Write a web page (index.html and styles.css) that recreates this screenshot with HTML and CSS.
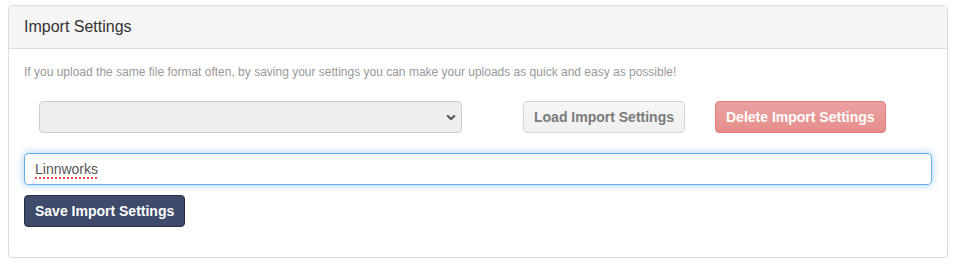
FILE: index.html
```html
<!DOCTYPE html>
<html lang="en">
<head>
    <meta charset="UTF-8">
    <meta name="viewport" content="width=device-width, initial-scale=1.0">
    <title>Import Settings</title>
    <link rel="stylesheet" href="styles.css">
</head>
<body>
    <div class="panel">
        <div class="panel-heading">Import Settings</div>
        <div class="panel-body">
            <p class="help-text">If you upload the same file format often, by saving your settings you can make your uploads as quick and easy as possible!</p>

            <div class="settings-row">
                <div class="select-col">
                    <select class="form-control" disabled>
                        <option></option>
                    </select>
                </div>
                <button class="btn btn-default" disabled>Load Import Settings</button>
                <button class="btn btn-danger" disabled>Delete Import Settings</button>
            </div>

            <div class="form-control name-input" contenteditable="true"><span class="misspelt">Linnworks</span></div>
            <button class="btn btn-primary">Save Import Settings</button>
        </div>
    </div>
</body>
</html>
```

FILE: styles.css
```css
body {
    font-family: 'Liberation Sans', Arial, Helvetica, sans-serif;
    color: #333;
    margin: 0;
    padding: 5px 6px 0 8px;
    background: #fff;
}

.panel {
    border: 1px solid #ddd;
    border-radius: 4px;
    box-shadow: 0 1px 1px rgba(0, 0, 0, 0.05);
}

.panel-heading {
    background: #f5f5f5;
    border-bottom: 1px solid #ddd;
    border-radius: 3px 3px 0 0;
    padding: 12px 15px 0;
    height: 30px;
    font-size: 16px;
    line-height: 18px;
    color: #333;
}

.panel-body {
    padding: 15px 15px 30px;
}

.help-text {
    margin: 0 0 21px;
    font-size: 12px;
    line-height: 16px;
    color: #999;
}

.settings-row {
    display: flex;
    align-items: center;
    margin-bottom: 20px;
}

.select-col {
    padding-left: 15px;
    width: 423px;
}

.form-control {
    display: block;
    width: 100%;
    box-sizing: border-box;
    font-family: inherit;
    font-size: 14px;
    color: #555;
    border: 1px solid #ccc;
    border-radius: 4px;
}

select.form-control {
    height: 32px;
    background: #eee url("data:image/svg+xml;utf8,<svg xmlns='http://www.w3.org/2000/svg' width='10' height='7' viewBox='0 0 10 7'><path d='M1.2 1.4 5 5 8.8 1.4' fill='none' stroke='%23555' stroke-width='2'/></svg>") no-repeat right 5px center;
    appearance: none;
    -webkit-appearance: none;
    opacity: 1;
}

.name-input {
    height: 32px;
    padding: 0 10px;
    margin-bottom: 10px;
    line-height: 30px;
    border-color: #66afe9;
    box-shadow: inset 0 1px 1px rgba(0, 0, 0, 0.075), 0 0 8px rgba(102, 175, 233, 0.6);
    outline: none;
}

.misspelt {
    text-decoration: underline dotted #f0504a;
    text-decoration-thickness: 2px;
    text-underline-offset: 3px;
}

.btn {
    height: 32px;
    padding: 0 10px;
    font-family: inherit;
    font-size: 14px;
    font-weight: bold;
    border: 1px solid transparent;
    border-radius: 4px;
    cursor: pointer;
}

.btn-default {
    margin-left: 61px;
    background: linear-gradient(#f7f7f7, #efefef);
    border-color: #d6d6d6;
    color: #7a7a7a;
    cursor: not-allowed;
}

.btn-danger {
    margin-left: 30px;
    background: linear-gradient(#eaa2a1, #e68e8c);
    border-color: #e27c7a;
    color: #fff;
    cursor: not-allowed;
}

.btn-primary {
    display: block;
    background: #3e4b6a;
    border-color: #252e44;
    color: #fff;
}
```
